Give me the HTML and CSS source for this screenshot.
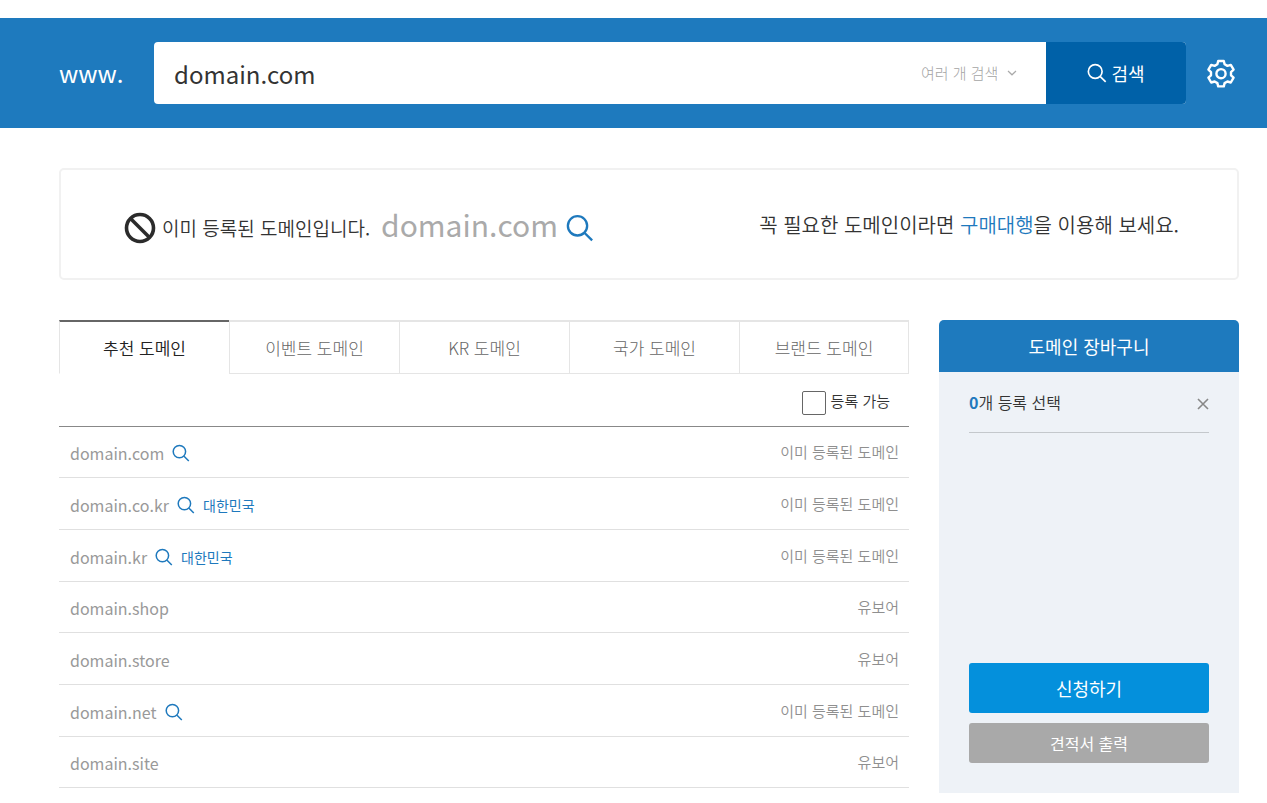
FILE: index.html
```
<!DOCTYPE html>
<html lang="ko">
<head>
<meta charset="utf-8">
<title>도메인 검색</title>
<link rel="stylesheet" href="styles.css">
</head>
<body>
<svg class="sprite" aria-hidden="true">
  <symbol id="lens" viewBox="0 0 18 18">
    <circle cx="7.4" cy="7.6" r="6.2"/>
    <path d="M12 12.200 16.800 17"/>
  </symbol>
</svg>

<header class="search-bar">
  <label class="prefix" for="query">www.</label>
  <form class="search-form">
    <input class="query" id="query" type="text" value="domain.com">
    <div class="mode">
      <select class="mode-select" aria-label="검색 방식"><option>여러 개 검색</option></select>
      <svg class="chevron" viewBox="0 0 10 6" aria-hidden="true"><path d="M1 1 5 4.8 9 1"/></svg>
    </div>
    <button class="submit" type="button">
      <svg class="lens lens-submit" aria-hidden="true"><use href="#lens"/></svg>
      <span>검색</span>
    </button>
  </form>
  <button class="settings" type="button" aria-label="설정">
    <svg class="gear" viewBox="0 0 30 30" aria-hidden="true">
      <path d="M12.2 3h5.600l.8 3.300 2.800 1.600 3.400-1 2.800 4.800-2.600 2.400v3.200l2.600 2.400-2.800 4.800-3.400-1-2.800 1.600-.8 3.300h-5.600l-.8-3.300-2.800-1.600-3.400 1-2.800-4.800 2.600-2.400v-3.200l-2.600-2.400 2.800-4.800 3.400 1 2.800-1.600z"/>
      <circle cx="15" cy="15.700" r="4.600"/>
    </svg>
  </button>
</header>

<div class="page">
  <section class="result">
    <div class="result-status">
      <svg class="ban" viewBox="0 0 32 32" aria-hidden="true"><circle cx="16" cy="16" r="13.500"/><path d="M6.500 6.500 25.500 25.500"/></svg>
      <span class="result-text">이미 등록된 도메인입니다.</span>
      <strong class="result-domain">domain.com</strong>
      <button class="lookup" type="button" aria-label="domain.com 조회"><svg class="lens lens-large" aria-hidden="true"><use href="#lens"/></svg></button>
    </div>
    <p class="result-help">꼭 필요한 도메인이라면 <a href="#agency">구매대행</a>을 이용해 보세요.</p>
  </section>

  <div class="columns">
    <main class="list">
      <div class="tabs" role="tablist">
        <button class="tab tab-active" type="button" role="tab" aria-selected="true">추천 도메인</button>
        <button class="tab" type="button" role="tab">이벤트 도메인</button>
        <button class="tab" type="button" role="tab">KR 도메인</button>
        <button class="tab" type="button" role="tab">국가 도메인</button>
        <button class="tab" type="button" role="tab">브랜드 도메인</button>
      </div>
      <div class="filter">
        <label class="filter-label"><input class="check" type="checkbox"><span>등록 가능</span></label>
      </div>
      <table class="domains">
        <tbody>
          <tr>
            <td><div class="name"><span>domain.com</span><button class="lookup" type="button" aria-label="조회"><svg class="lens" aria-hidden="true"><use href="#lens"/></svg></button></div></td>
            <td class="state">이미 등록된 도메인</td>
          </tr>
          <tr>
            <td><div class="name"><span>domain.co.kr</span><button class="lookup" type="button" aria-label="조회"><svg class="lens" aria-hidden="true"><use href="#lens"/></svg></button><span class="country">대한민국</span></div></td>
            <td class="state">이미 등록된 도메인</td>
          </tr>
          <tr>
            <td><div class="name"><span>domain.kr</span><button class="lookup" type="button" aria-label="조회"><svg class="lens" aria-hidden="true"><use href="#lens"/></svg></button><span class="country">대한민국</span></div></td>
            <td class="state">이미 등록된 도메인</td>
          </tr>
          <tr>
            <td><div class="name"><span>domain.shop</span></div></td>
            <td class="state">유보어</td>
          </tr>
          <tr>
            <td><div class="name"><span>domain.store</span></div></td>
            <td class="state">유보어</td>
          </tr>
          <tr>
            <td><div class="name"><span>domain.net</span><button class="lookup" type="button" aria-label="조회"><svg class="lens" aria-hidden="true"><use href="#lens"/></svg></button></div></td>
            <td class="state">이미 등록된 도메인</td>
          </tr>
          <tr>
            <td><div class="name"><span>domain.site</span></div></td>
            <td class="state">유보어</td>
          </tr>
        </tbody>
      </table>
    </main>

    <aside class="cart">
      <h2 class="cart-title">도메인 장바구니</h2>
      <div class="cart-body">
        <div class="cart-count">
          <span><b>0</b>개 등록 선택</span>
          <button class="clear" type="button" aria-label="비우기"><svg class="cross" viewBox="0 0 12 12" aria-hidden="true"><path d="M1 1 11 11M11 1 1 11"/></svg></button>
        </div>
        <div class="cart-actions">
          <button class="apply" type="button">신청하기</button>
          <button class="estimate" type="button">견적서 출력</button>
        </div>
      </div>
    </aside>
  </div>
</div>
</body>
</html>
```
FILE: styles.css
```
* {
  box-sizing: border-box;
}

body {
  margin: 0;
  padding-top: 18px;
  background: #fff;
  color: #333;
  font-family: "Noto Sans CJK KR", sans-serif;
  font-size: 16px;
  line-height: 24px;
}

button,
input,
select {
  margin: 0;
  padding: 0;
  border: 0;
  background: none;
  color: inherit;
  font: inherit;
  appearance: none;
}

button {
  cursor: pointer;
}

svg {
  display: block;
  fill: none;
}

.sprite {
  position: absolute;
  width: 0;
  height: 0;
}

.lens {
  width: 18px;
  height: 18px;
  stroke: #1e79bd;
  stroke-width: 1.5;
}

.search-bar {
  display: flex;
  align-items: center;
  gap: 20px;
  padding: 24px 31px 24px 59px;
  background: #1e7abe;
  color: #fff;
}

.prefix {
  width: 75px;
  font-size: 24px;
}

.search-form {
  display: flex;
  flex: 1;
  height: 62px;
  overflow: hidden;
  border-radius: 4px;
  background: #fff;
}

.query {
  flex: 1;
  min-width: 0;
  padding: 0 20px;
  color: #333;
  font-size: 24px;
}

.mode {
  display: flex;
  align-items: center;
  gap: 10px;
  padding-right: 29px;
  color: #a4a4a4;
  font-size: 15px;
  font-weight: 300;
}

.chevron {
  width: 10px;
  height: 6px;
  stroke: #aaa;
  stroke-width: 1.2;
}

.submit {
  display: flex;
  align-items: center;
  justify-content: center;
  gap: 4px;
  width: 140px;
  background: #0061a8;
  font-size: 18px;
}

.lens-submit {
  width: 20px;
  height: 20px;
  stroke: #fff;
}

.gear {
  width: 30px;
  height: 30px;
  stroke: #fff;
  stroke-width: 2.4;
  stroke-linejoin: round;
}

.page {
  padding: 40px 28px 0 59px;
}

.result {
  display: flex;
  align-items: center;
  justify-content: space-between;
  height: 112px;
  padding: 0 58px 0 63px;
  border: 2px solid #f1f1f1;
  border-radius: 5px;
}

.result-status {
  display: flex;
  align-items: flex-end;
}

.ban {
  width: 32px;
  height: 32px;
  margin-right: 6px;
  stroke: #2b2b2b;
  stroke-width: 3.6;
}

.result-text {
  font-size: 19px;
  font-weight: 350;
  line-height: 32px;
}

.result-domain {
  margin: 0 8px 0 11px;
  color: #aaa;
  font-size: 30px;
  font-weight: 400;
  line-height: 40px;
}

.lens-large {
  width: 28px;
  height: 32px;
}

.result-help {
  margin: 0;
  padding-top: 2px;
  font-size: 20px;
  font-weight: 350;
}

.result-help a {
  color: #1e79bd;
  text-decoration: none;
}

.columns {
  display: grid;
  grid-template-columns: 1fr 300px;
  gap: 30px;
  padding-top: 40px;
}

.list {
  padding-bottom: 5px;
}

.tabs {
  display: grid;
  grid-template-columns: repeat(5, 1fr);
}

.tab {
  height: 54px;
  border: solid #e5e5e5;
  border-width: 2px 0 1px 1px;
  color: #666;
  font-size: 17px;
  font-weight: 300;
}

.tab:last-child {
  border-right-width: 1px;
}

.tab-active {
  border-top-color: #666;
  border-bottom-color: transparent;
  color: #222;
  font-weight: 350;
}

.filter {
  display: flex;
  align-items: center;
  justify-content: flex-end;
  height: 53px;
  padding: 5px 19px 0 0;
  border-bottom: 1px solid #888;
}

.filter-label {
  display: flex;
  gap: 5px;
  font-size: 15px;
  font-weight: 350;
  line-height: 20px;
}

.check {
  width: 24px;
  height: 24px;
  border: 1px solid #666;
  border-radius: 2px;
}

.domains {
  width: 100%;
  border-collapse: separate;
  border-spacing: 0;
  color: #999;
}

.domains td {
  height: 52px;
  padding: 0 11px;
  border-bottom: 1px solid #e0e0e0;
}

.domains tr:nth-child(3n + 1) td {
  height: 51px;
}

.name {
  display: flex;
  align-items: center;
  gap: 8px;
  padding-top: 2px;
}

.country {
  color: #1e79bd;
  font-size: 14px;
}

.domains .state {
  padding-right: 10px;
  color: #8f8f8f;
  font-size: 15px;
  font-weight: 350;
  text-align: right;
}

.cart {
  display: flex;
  flex-direction: column;
  overflow: hidden;
  border-radius: 5px 5px 0 0;
  background: #eef2f7;
}

.cart-title {
  margin: 0;
  background: #1e7abe;
  color: #fff;
  font-size: 18px;
  font-weight: 400;
  line-height: 52px;
  text-align: center;
}

.cart-body {
  display: flex;
  flex: 1;
  flex-direction: column;
  justify-content: space-between;
  padding: 0 30px 30px;
}

.cart-count {
  display: flex;
  align-items: center;
  justify-content: space-between;
  height: 61px;
  border-bottom: 1px solid #c4c8cc;
  font-weight: 350;
}

.cart-count b {
  color: #1e79bd;
}

.clear {
  padding-top: 3px;
}

.cross {
  width: 12px;
  height: 12px;
  stroke: #888;
  stroke-width: 1.6;
}

.cart-actions {
  display: grid;
  gap: 10px;
}

.apply,
.estimate {
  height: 50px;
  border-radius: 3px;
  background: #0490dc;
  color: #fff;
  font-size: 18px;
}

.estimate {
  height: 40px;
  background: #a9a9a9;
  font-size: 16px;
}
```
